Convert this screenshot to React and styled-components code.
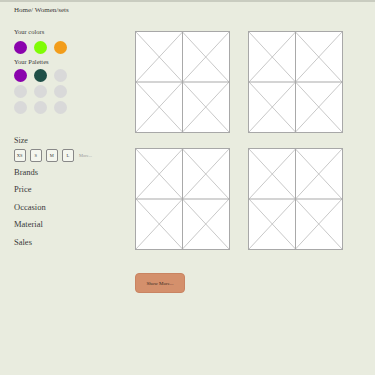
import React from "react";
import styled, { createGlobalStyle } from "styled-components";

const colors = ["#8a03ad", "#7ffc04", "#f29d1b"];
const palettes = [
  "#8a03ad",
  "#1f4f47",
  "#d9d9d9",
  "#d9d9d9",
  "#d9d9d9",
  "#d9d9d9",
  "#d9d9d9",
  "#d9d9d9",
  "#d9d9d9",
];
const sizes = ["XS", "S", "M", "L"];
const filters = ["Brands", "Price", "Occasion", "Material", "Sales"];

function Placeholder() {
  return (
    <ImageBox>
      <svg width="100%" height="100%" viewBox="0 0 95 101" preserveAspectRatio="none">
        <g stroke="#b9b9b9" strokeWidth="0.8" fill="none">
          <line x1="0" y1="0" x2="47.5" y2="50.5" />
          <line x1="47.5" y1="0" x2="0" y2="50.5" />
          <line x1="47.5" y1="0" x2="95" y2="50.5" />
          <line x1="95" y1="0" x2="47.5" y2="50.5" />
          <line x1="0" y1="50.5" x2="47.5" y2="101" />
          <line x1="47.5" y1="50.5" x2="0" y2="101" />
          <line x1="47.5" y1="50.5" x2="95" y2="101" />
          <line x1="95" y1="50.5" x2="47.5" y2="101" />
        </g>
        <g stroke="#a8a8a8" strokeWidth="1" fill="none">
          <line x1="47.5" y1="0" x2="47.5" y2="101" />
          <line x1="0" y1="50.5" x2="95" y2="50.5" />
        </g>
      </svg>
    </ImageBox>
  );
}

function App() {
  return (
    <>
      <GlobalStyle />
      <Page>
        <Sidebar>
          <Crumb>Home/ Women/sets</Crumb>
          <SmallTitle $top={14}>Your colors</SmallTitle>
          <Swatches $top={5}>
            {colors.map((c, i) => (
              <Dot key={i} $color={c} />
            ))}
          </Swatches>
          <SmallTitle $top={4}>Your Palettes</SmallTitle>
          <Swatches $top={3}>
            {palettes.map((c, i) => (
              <Dot key={i} $color={c} />
            ))}
          </Swatches>
          <SizeTitle>Size</SizeTitle>
          <SizeRow>
            {sizes.map((s) => (
              <SizeBox key={s}>{s}</SizeBox>
            ))}
            <More>More...</More>
          </SizeRow>
          <Filters>
            {filters.map((f) => (
              <Filter key={f}>{f}</Filter>
            ))}
          </Filters>
        </Sidebar>
        <Main>
          <Gallery>
            <Placeholder />
            <Placeholder />
            <Placeholder />
            <Placeholder />
          </Gallery>
          <ShowMore>Show More...</ShowMore>
        </Main>
      </Page>
    </>
  );
}

const GlobalStyle = createGlobalStyle`
  html, body {
    margin: 0;
    padding: 0;
    background: #e9ecdf;
  }
  body {
    font-family: "Liberation Serif", "DejaVu Serif", serif;
    color: #3a3a3a;
  }
`;

const Page = styled.div`
  display: flex;
  min-height: 375px;
  box-sizing: border-box;
  border-top: 2px solid #c9ccc0;
  background: #e9ecdf;
`;

const Sidebar = styled.div`
  width: 121px;
  padding: 4px 0 0 14px;
  display: flex;
  flex-direction: column;
`;

const Crumb = styled.div`
  font-size: 7px;
  line-height: 8px;
  color: #3a3a3a;
`;

const SmallTitle = styled.div`
  margin-top: ${(p) => p.$top}px;
  font-size: 6.5px;
  line-height: 8px;
  color: #3a3a3a;
`;

const Swatches = styled.div`
  margin-top: ${(p) => p.$top}px;
  display: grid;
  grid-template-columns: repeat(3, 13px);
  column-gap: 7px;
  row-gap: 3px;
`;

const Dot = styled.div`
  width: 13px;
  height: 13px;
  border-radius: 50%;
  background: ${(p) => p.$color};
`;

const SizeTitle = styled.div`
  margin-top: 22px;
  font-size: 8px;
  line-height: 10px;
  color: #3a3a3a;
`;

const SizeRow = styled.div`
  margin-top: 3px;
  display: flex;
  align-items: center;
  gap: 4.5px;
`;

const SizeBox = styled.div`
  width: 9.5px;
  height: 10.5px;
  border: 0.8px solid #888;
  border-radius: 2px;
  background: #f4f6ee;
  font-size: 4.5px;
  display: flex;
  align-items: center;
  justify-content: center;
  color: #3a3a3a;
`;

const More = styled.span`
  margin-left: 1px;
  font-size: 4.5px;
  color: #999;
`;

const Filters = styled.div`
  margin-top: 2px;
  display: flex;
  flex-direction: column;
`;

const Filter = styled.div`
  font-size: 8.5px;
  line-height: 17.5px;
  color: #3a3a3a;
`;

const Main = styled.div`
  padding-top: 29px;
  display: flex;
  flex-direction: column;
  align-items: flex-start;
`;

const Gallery = styled.div`
  display: grid;
  grid-template-columns: repeat(2, 95px);
  column-gap: 18px;
  row-gap: 15px;
`;

const ImageBox = styled.div`
  width: 95px;
  height: 102px;
  box-sizing: border-box;
  border: 0.8px solid #a8a8a8;
  background: #fff;
  svg {
    display: block;
  }
`;

const ShowMore = styled.button`
  margin-top: 23px;
  width: 50px;
  height: 20px;
  border: 0.8px solid #c98462;
  border-radius: 4px;
  background: #d4906c;
  font-family: "Liberation Serif", serif;
  font-size: 5px;
  color: #3a2a22;
  padding: 0;
`;

export default App;
